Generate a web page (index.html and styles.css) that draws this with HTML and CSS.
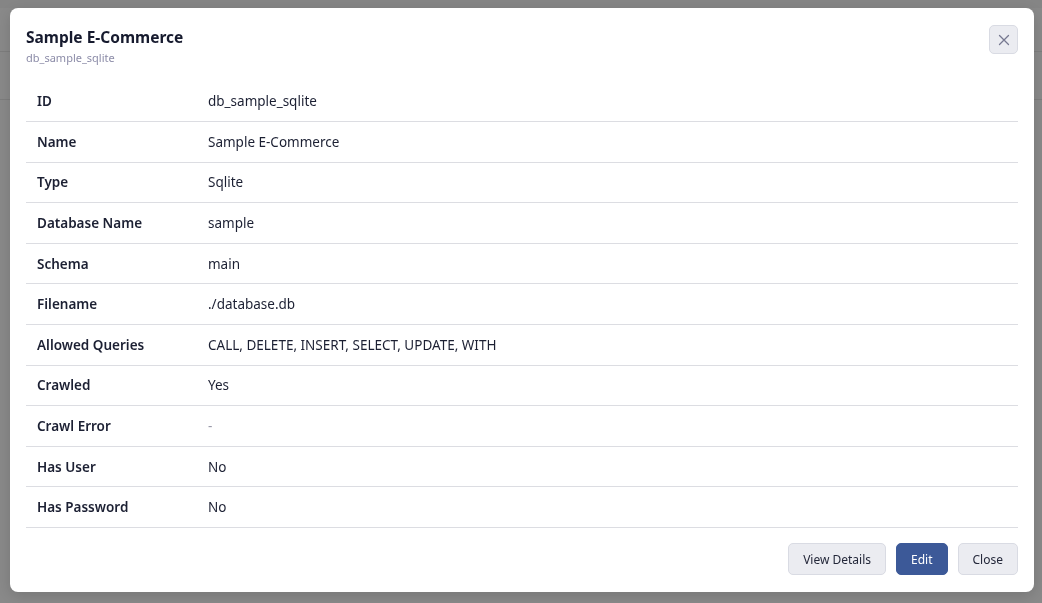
FILE: index.html
```html
<!DOCTYPE html>
<html lang="en">
<head>
  <meta charset="UTF-8" />
  <meta name="viewport" content="width=device-width, initial-scale=1.0"/>
  <title>Connection</title>
  <link rel="stylesheet" href="styles.css">
</head>
<body>

  <!-- Page behind the dialog -->
  <div class="page">
    <div class="page-top"></div>
    <div class="page-header"></div>
    <div class="page-row"></div>
  </div>
  <div class="overlay"></div>

  <!-- Dialog -->
  <div class="modal">
    <div class="modal-head">
      <div>
        <h1 class="modal-title">Sample E-Commerce</h1>
        <div class="modal-sub">db_sample_sqlite</div>
      </div>
      <button class="close-x" aria-label="Close">
        <svg width="12" height="12" viewBox="0 0 12 12">
          <path d="M1.5 1.5 L10.5 10.5 M10.5 1.5 L1.5 10.5" stroke="#767890" stroke-width="1.3" stroke-linecap="round" fill="none"/>
        </svg>
      </button>
    </div>

    <table class="details">
      <tr><th>ID</th><td>db_sample_sqlite</td></tr>
      <tr><th>Name</th><td>Sample E-Commerce</td></tr>
      <tr><th>Type</th><td>Sqlite</td></tr>
      <tr><th>Database Name</th><td>sample</td></tr>
      <tr><th>Schema</th><td>main</td></tr>
      <tr><th>Filename</th><td>./database.db</td></tr>
      <tr><th>Allowed Queries</th><td>CALL, DELETE, INSERT, SELECT, UPDATE, WITH</td></tr>
      <tr><th>Crawled</th><td>Yes</td></tr>
      <tr><th>Crawl Error</th><td class="muted">-</td></tr>
      <tr><th>Has User</th><td>No</td></tr>
      <tr><th>Has Password</th><td>No</td></tr>
    </table>

    <div class="modal-foot">
      <button class="btn">View Details</button>
      <button class="btn btn-primary">Edit</button>
      <button class="btn">Close</button>
    </div>
  </div>

</body>
</html>
```

FILE: styles.css
```css
* {
  box-sizing: border-box;
  margin: 0;
  padding: 0;
}

body {
  font-family: 'Noto Sans', 'Open Sans', sans-serif;
  background: #fafafa;
  color: #1c2033;
  overflow: hidden;
}

.page-top {
  height: 8px;
  background: #f2f2f2;
}

.page-header {
  height: 44px;
  border-bottom: 1px solid #e4e4e4;
}

.page-row {
  height: 48px;
  border-bottom: 1px solid #e4e4e4;
}

.overlay {
  position: fixed;
  inset: 0;
  background: rgba(0, 0, 0, 0.45);
}

.modal {
  position: fixed;
  top: 8px;
  left: 10px;
  width: 1024px;
  height: 584px;
  background: #fff;
  border-radius: 8px;
  padding: 16px 16px 17px;
  display: flex;
  flex-direction: column;
  box-shadow: 0 4px 16px rgba(0, 0, 0, 0.15);
}

.modal-head {
  display: flex;
  justify-content: space-between;
  align-items: flex-start;
  height: 57px;
}

.modal-title {
  font-size: 15.5px;
  font-weight: 700;
  line-height: 26px;
  color: #161a2e;
}

.modal-sub {
  font-size: 11px;
  line-height: 15px;
  color: #8c8ca8;
}

.close-x {
  width: 29px;
  height: 29px;
  margin-top: 1px;
  background: #ebecf1;
  border: 1px solid #d9dbe3;
  border-radius: 5px;
  display: flex;
  align-items: center;
  justify-content: center;
}

.details {
  width: 100%;
  border-collapse: collapse;
  font-size: 13.5px;
}

.details tr {
  height: 40.6px;
  border-bottom: 1px solid #dcdde2;
}

.details th {
  width: 182px;
  text-align: left;
  font-weight: 600;
  padding: 0 11px;
  color: #1c2033;
}

.details td {
  padding: 0;
  color: #1c2033;
}

.details td.muted {
  color: #9a9aaa;
}

.modal-foot {
  margin-top: auto;
  display: flex;
  justify-content: flex-end;
  gap: 10px;
}

.btn {
  height: 32px;
  padding: 0 14px;
  font-family: inherit;
  font-size: 12px;
  color: #24283a;
  background: #ebecf1;
  border: 1px solid #d9dbe3;
  border-radius: 5px;
}

.btn-primary {
  background: #3c5998;
  border-color: #3c5998;
  color: #fff;
}
```
